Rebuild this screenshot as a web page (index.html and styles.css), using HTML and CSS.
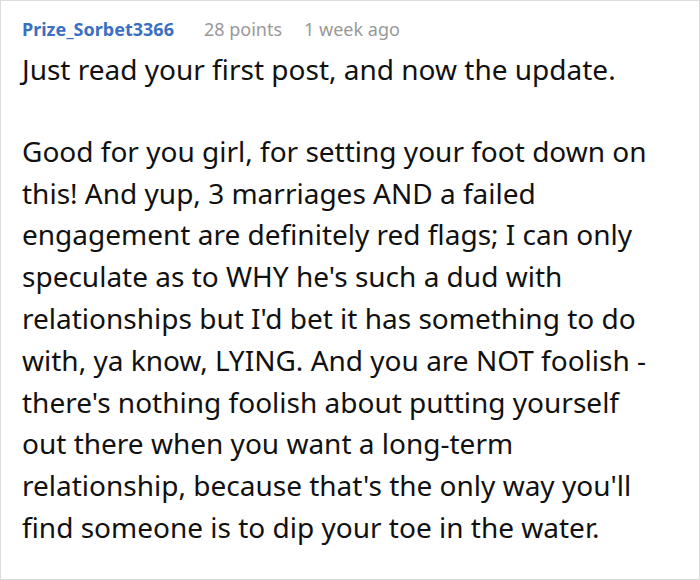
FILE: index.html
```html
<!DOCTYPE html>
<html lang="en">
<head>
<meta charset="utf-8">
<title>Comment</title>
<link rel="stylesheet" href="styles.css">
</head>
<body>
<div class="card">
  <div class="meta">
    <span class="author">Prize_Sorbet3366</span>
    <span class="points">28 points</span>
    <span class="time">1 week ago</span>
  </div>
  <div class="body">
    <p>Just read your first post, and now the update.</p>
    <p>Good for you girl, for setting your foot down on this! And yup, 3 marriages AND a failed engagement are definitely red flags; I can only speculate as to WHY he's such a dud with relationships but I'd bet it has something to do with, ya know, LYING. And you are NOT foolish - there's nothing foolish about putting yourself out there when you want a long-term relationship, because that's the only way you'll find someone is to dip your toe in the water.</p>
  </div>
</div>
</body>
</html>
```
FILE: styles.css
```css
html, body {
  margin: 0;
  padding: 0;
  background: #ffffff;
}
.card {
  box-sizing: border-box;
  width: 700px;
  height: 580px;
  border: 1px solid #dcdcdc;
  padding: 16px 29px 0 21px;
  font-family: "Noto Sans", sans-serif;
  color: #111111;
}
.meta {
  font-size: 18px;
  line-height: 25px;
  display: flex;
  align-items: baseline;
}
.author {
  font-weight: 700;
  color: #3a6fc2;
}
.points {
  margin-left: 30px;
  color: #999999;
}
.time {
  margin-left: 22px;
  color: #999999;
}
.body {
  margin-top: 7px;
  font-size: 28px;
  line-height: 41.8px;
}
.body p {
  margin: 0 0 40px 0;
}
```
